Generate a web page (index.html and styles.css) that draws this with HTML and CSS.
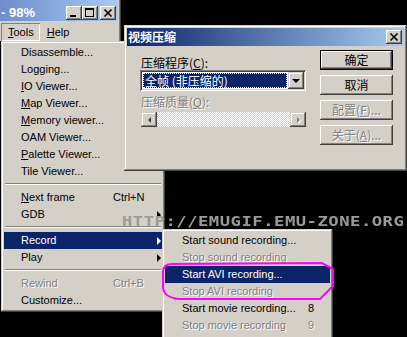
FILE: index.html
```html
<!DOCTYPE html>
<html lang="zh-CN">
<head>
    <meta charset="UTF-8">
    <title>视频压缩</title>
    <link rel="stylesheet" href="styles.css">
</head>
<body>
<div class="desk">

    <div class="mainwin">
        <div class="caption">
            <span class="caption-text">- 98%</span>
            <span class="cbtn cbtn-min"><svg width="16" height="14" viewBox="0 0 16 14"><rect x="4" y="9" width="6" height="2" fill="#000"/></svg></span>
            <span class="cbtn cbtn-max"><svg width="16" height="14" viewBox="0 0 16 14"><path d="M3 2h9v9h-9z M4 4v6h7v-6z" fill="#000" fill-rule="evenodd"/></svg></span>
            <span class="cbtn cbtn-close"><svg width="16" height="14" viewBox="0 0 16 14"><path d="M4.5 3.5L11.5 10.5M11.5 3.5L4.5 10.5" stroke="#000" stroke-width="1.7"/></svg></span>
        </div>
        <div class="menubar">
            <span class="mb-item pressed"><u>T</u>ools</span>
            <span class="mb-item"><u>H</u>elp</span>
        </div>
    </div>

    <div class="menu tools-menu">
        <div class="mi"><span>Disassemble...</span></div>
        <div class="mi"><span>Logging...</span></div>
        <div class="mi"><span><u>I</u>O Viewer...</span></div>
        <div class="mi"><span><u>M</u>ap Viewer...</span></div>
        <div class="mi"><span><u>M</u>emory viewer...</span></div>
        <div class="mi"><span>OAM Viewer...</span></div>
        <div class="mi"><span><u>P</u>alette Viewer...</span></div>
        <div class="mi"><span>Tile Viewer...</span></div>
        <div class="sep"></div>
        <div class="mi"><span><u>N</u>ext frame</span><span>Ctrl+N</span></div>
        <div class="mi"><span>GDB</span><span></span><i class="arrow"></i></div>
        <div class="sep"></div>
        <div class="mi hot"><span>Record</span><span></span><i class="arrow"></i></div>
        <div class="mi"><span>Play</span><span></span><i class="arrow"></i></div>
        <div class="sep"></div>
        <div class="mi off"><span>Rewind</span><span>Ctrl+B</span></div>
        <div class="mi"><span>Customize...</span></div>
    </div>

    <div class="dialog">
        <div class="dlg-caption">
            <span class="dlg-title">视频压缩</span>
            <span class="cbtn"><svg width="16" height="14" viewBox="0 0 16 14"><path d="M4.5 3.5L11.5 10.5M11.5 3.5L4.5 10.5" stroke="#000" stroke-width="1.7"/></svg></span>
        </div>
        <div class="dlg-body">
            <div class="dlg-left">
                <div class="label">压缩程序(<u>C</u>):</div>
                <div class="combo">
                    <span class="combo-value">全帧 (非压缩的)</span>
                    <span class="combo-btn"><i class="down"></i></span>
                </div>
                <div class="label off">压缩质量(<u>Q</u>):</div>
                <div class="scroll">
                    <span class="sb-btn"><i class="tri-left"></i></span>
                    <span class="sb-track"></span>
                    <span class="sb-btn"><i class="tri-right"></i></span>
                </div>
            </div>
            <div class="dlg-right">
                <div class="btn default">确定</div>
                <div class="btn">取消</div>
                <div class="btn off">配置(<u>F</u>)...</div>
                <div class="btn off">关于(<u>A</u>)...</div>
            </div>
        </div>
    </div>

    <div class="menu record-menu">
        <div class="mi"><span>Start sound recording...</span></div>
        <div class="mi off"><span>Stop sound recording</span></div>
        <div class="mi hot"><span>Start AVI recording...</span></div>
        <div class="mi off"><span>Stop AVI recording</span></div>
        <div class="mi"><span>Start movie recording...</span><span>8</span></div>
        <div class="mi off"><span>Stop movie recording</span><span>9</span></div>
    </div>

    <div class="watermark">HTTP://EMUGIF.EMU-ZONE.ORG</div>

    <svg class="mark" width="407" height="337" viewBox="0 0 407 337">
        <path d="M172 264 L322 263 L333 269 L333 286 L320 299 L178 299 Q164 297 163 288 L163 272 Q163 264 172 264 Z" fill="none" stroke="#ff00ff" stroke-width="2"/>
    </svg>
</div>
</body>
</html>
```

FILE: styles.css
```css
body {
    margin: 0;
    background: #000;
    font-family: "Liberation Sans", Arial, sans-serif;
    font-size: 11px;
    color: #000;
}
.desk {
    position: relative;
    width: 407px;
    height: 337px;
    overflow: hidden;
    background: #000;
}

/* main window */
.mainwin {
    position: absolute;
    left: 0;
    top: 0;
    width: 121px;
    height: 41px;
    background: #d4d0c8;
    box-shadow: inset -1px 0 #404040, inset -2px 0 #808080;
    z-index: 1;
}
.caption {
    display: flex;
    align-items: flex-start;
    height: 21px;
    width: 118px;
    background: linear-gradient(90deg, #6d8ecb, #a6caf0);
}
.caption-text {
    flex: 1;
    padding: 5px 0 0 1px;
    color: #fff;
    font-weight: bold;
    font-size: 13px;
    line-height: 15px;
}
.cbtn {
    display: block;
    width: 16px;
    height: 14px;
    margin-top: 6px;
    background: #d4d0c8;
    box-shadow: inset -1px -1px #404040, inset 1px 1px #fff, inset -2px -2px #808080, inset 2px 2px #d4d0c8;
}
.cbtn svg {
    display: block;
}
.cbtn-max {
    margin-right: 2px;
}
.cbtn-close {
    margin-right: 2px;
}
.menubar {
    display: flex;
    padding: 2px 0 0 1px;
    height: 18px;
}
.mb-item {
    padding: 0 6px 0 7px;
    line-height: 18px;
    font-size: 11px;
}
.mb-item.pressed {
    box-shadow: inset 1px 1px #808080, inset -1px -1px #fff;
}

/* menus */
.menu {
    position: absolute;
    padding: 3px;
    background: #d4d0c8;
    box-shadow: inset -1px -1px #404040, inset 1px 1px #d4d0c8, inset -2px -2px #808080, inset 2px 2px #fff;
}
.tools-menu {
    left: 1px;
    top: 41px;
    width: 158px;
    z-index: 2;
}
.record-menu {
    left: 162px;
    top: 229px;
    width: 165px;
    padding-bottom: 10px;
    z-index: 4;
}
.mi {
    display: grid;
    grid-template-columns: 92px 41px 8px;
    align-items: center;
    height: 17px;
    line-height: 17px;
    padding-left: 17px;
    white-space: nowrap;
}
.record-menu .mi {
    grid-template-columns: 126px 1fr;
}
.mi.hot {
    background: #0a246a;
    color: #fff;
}
.mi.off, .label.off, .btn.off {
    color: #808080;
    text-shadow: 1px 1px 0 #fff;
}
.arrow {
    display: block;
    width: 0;
    height: 0;
    margin-left: 3px;
    border-left: 4px solid #000;
    border-top: 4px solid transparent;
    border-bottom: 4px solid transparent;
}
.hot .arrow {
    border-left-color: #fff;
}
.sep {
    margin: 3px 1px 4px;
    border-top: 1px solid #808080;
    border-bottom: 1px solid #fff;
}

/* dialog */
.dialog {
    position: absolute;
    left: 124px;
    top: 25px;
    width: 277px;
    height: 140px;
    padding: 3px;
    background: #d4d0c8;
    box-shadow: inset -1px -1px #404040, inset 1px 1px #d4d0c8, inset -2px -2px #808080, inset 2px 2px #fff;
    font-family: "Noto Sans CJK SC", "Liberation Sans", sans-serif;
    font-size: 12px;
    z-index: 3;
}
.dlg-caption {
    display: flex;
    align-items: flex-start;
    height: 18px;
    background: linear-gradient(90deg, #0a246a, #a6caf0);
}
.dlg-title {
    flex: 1;
    padding-left: 1px;
    color: #fff;
    font-weight: bold;
    line-height: 18px;
}
.dlg-caption .cbtn {
    margin: 2px 2px 0 0;
}
.dlg-body {
    display: flex;
    gap: 14px;
    padding-left: 13px;
}
.dlg-left {
    width: 166px;
    padding-top: 10px;
}
.label {
    height: 14px;
    line-height: 14px;
    padding-left: 1px;
}
.label.off {
    margin-top: 4px;
}
.combo {
    display: flex;
    align-items: center;
    height: 21px;
    padding: 2px;
    box-sizing: border-box;
    background: #fff;
    box-shadow: inset 1px 1px #808080, inset -1px -1px #fff, inset 2px 2px #404040, inset -2px -2px #d4d0c8;
}
.combo-value {
    flex: 1;
    height: 15px;
    margin: 0 1px;
    line-height: 15px;
    padding-left: 2px;
    background: #0a246a;
    color: #fff;
    outline: 1px dotted #f0f0c0;
    outline-offset: -1px;
}
.combo-btn {
    display: flex;
    align-items: center;
    justify-content: center;
    width: 16px;
    height: 17px;
    background: #d4d0c8;
    box-shadow: inset -1px -1px #404040, inset 1px 1px #d4d0c8, inset -2px -2px #808080, inset 2px 2px #fff;
}
.down {
    display: block;
    width: 0;
    height: 0;
    border-top: 4px solid #000;
    border-left: 4px solid transparent;
    border-right: 4px solid transparent;
}
.scroll {
    display: flex;
    height: 15px;
    margin-top: 3px;
    margin-left: 1px;
}
.sb-btn {
    display: flex;
    align-items: center;
    justify-content: center;
    width: 16px;
    background: #d4d0c8;
    box-shadow: inset -1px -1px #404040, inset 1px 1px #d4d0c8, inset -2px -2px #808080, inset 2px 2px #fff;
}
.sb-track {
    flex: 1;
    background: repeating-conic-gradient(#fff 0 25%, #d4d0c8 0 50%) 0 0 / 2px 2px;
}
.tri-left {
    display: block;
    width: 0;
    height: 0;
    border-right: 3px solid #404040;
    border-top: 3px solid transparent;
    border-bottom: 3px solid transparent;
}
.tri-right {
    display: block;
    width: 0;
    height: 0;
    border-left: 3px solid #808080;
    border-top: 3px solid transparent;
    border-bottom: 3px solid transparent;
    filter: drop-shadow(1px 1px 0 #fff);
}
.dlg-right {
    display: flex;
    flex-direction: column;
    gap: 5px;
    width: 73px;
    padding-top: 4px;
}
.btn {
    height: 20px;
    line-height: 20px;
    text-align: center;
    background: #d4d0c8;
    box-shadow: inset -1px -1px #404040, inset 1px 1px #fff, inset -2px -2px #808080, inset 2px 2px #d4d0c8;
}
.btn.default {
    box-shadow: inset 0 0 0 1px #000, inset -2px -2px #404040, inset 2px 2px #fff, inset -3px -3px #808080;
}

/* overlays */
.watermark {
    position: absolute;
    left: 122px;
    top: 214px;
    font-family: "DejaVu Sans Mono", monospace;
    font-weight: bold;
    font-size: 14px;
    line-height: 14px;
    letter-spacing: 0.4px;
    color: #9a9a9a;
    white-space: nowrap;
    transform: scaleX(1.23);
    transform-origin: left top;
    z-index: 5;
}
.mark {
    position: absolute;
    left: 0;
    top: 0;
    z-index: 6;
}
```
